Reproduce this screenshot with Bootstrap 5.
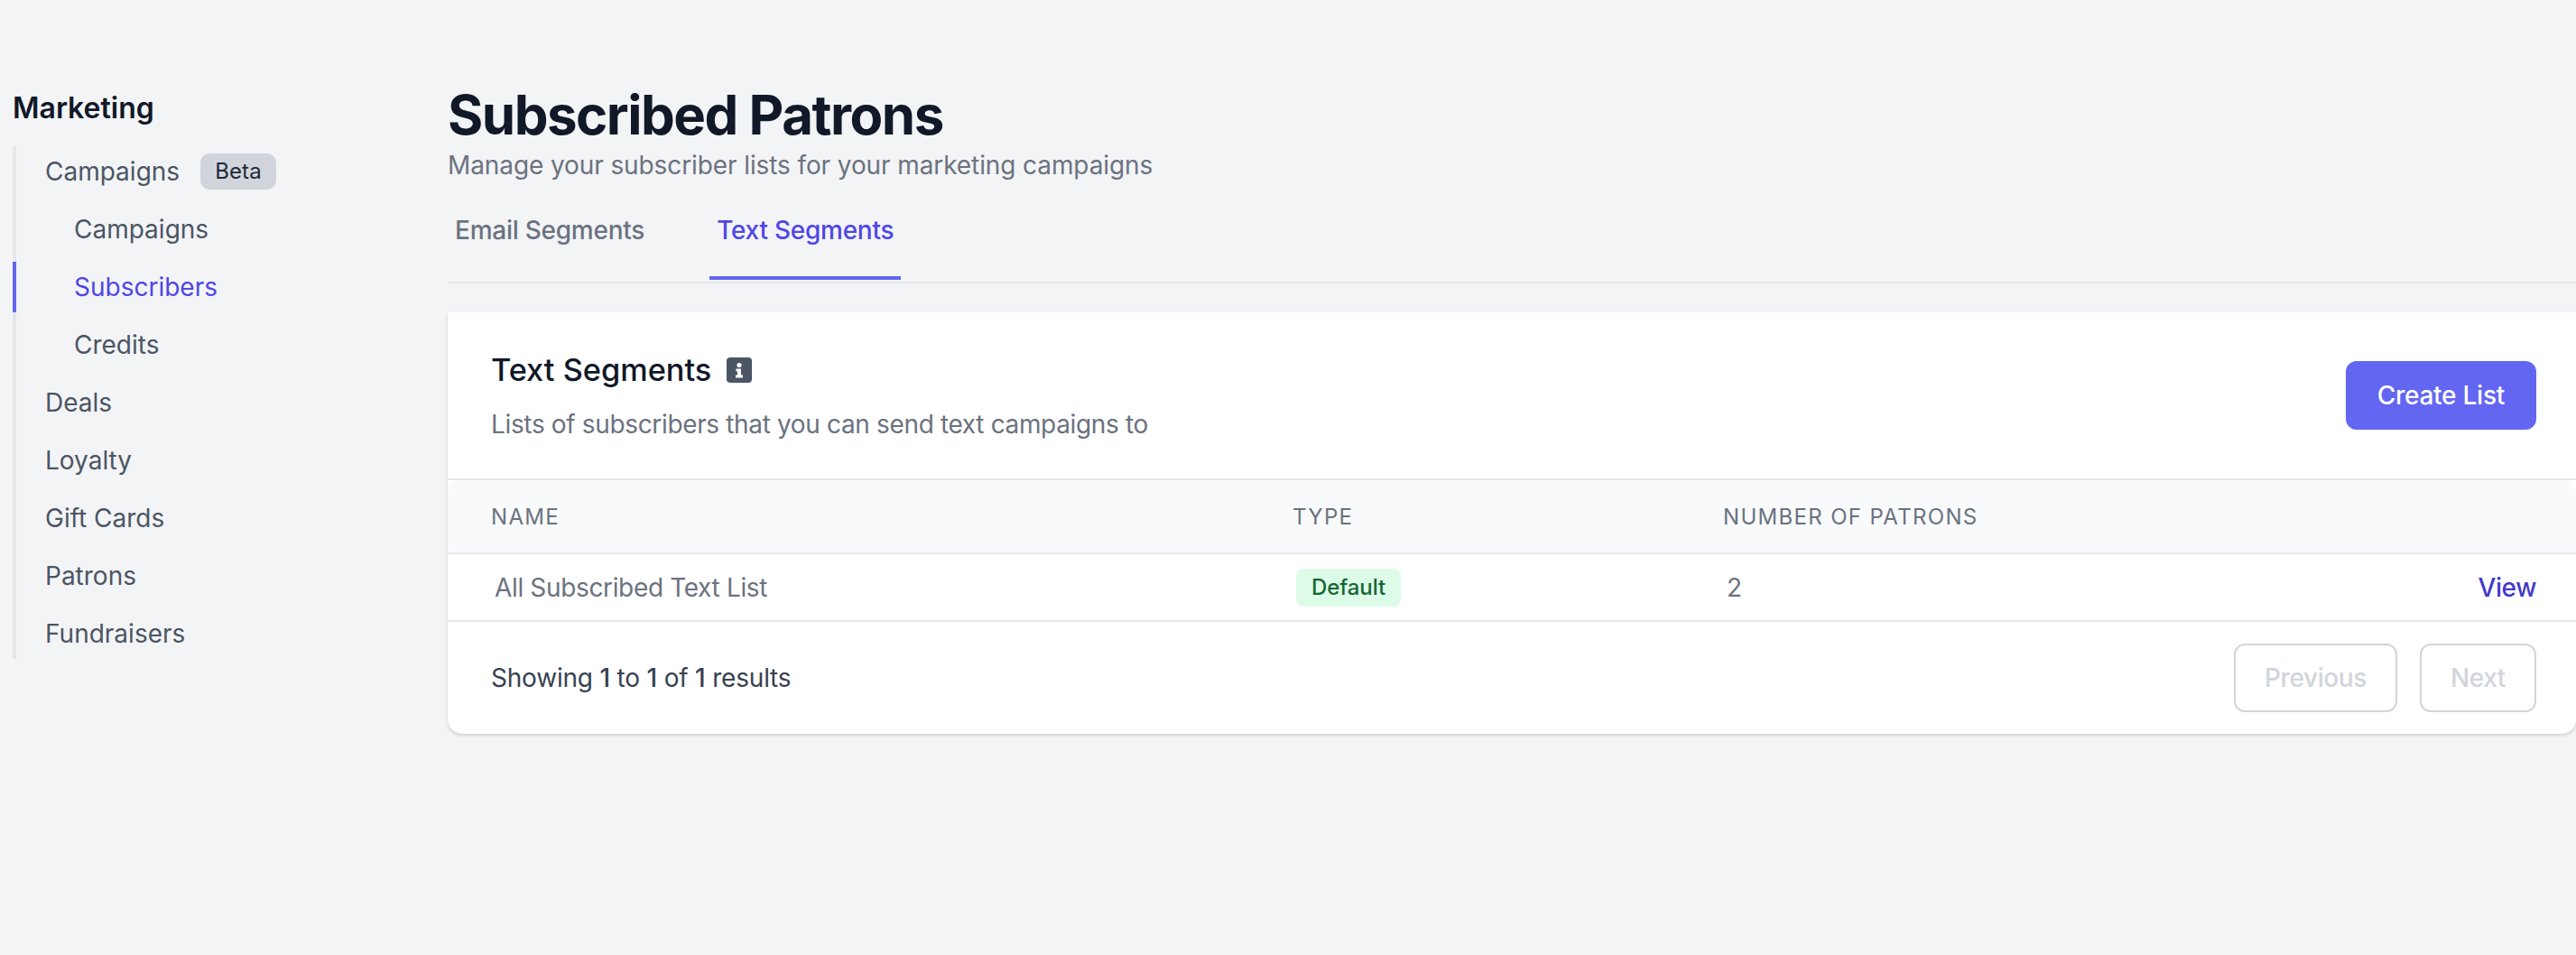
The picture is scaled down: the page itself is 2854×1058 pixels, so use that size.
<!DOCTYPE html>
<html lang="en">
<head>
<meta charset="utf-8">
<title>Subscribed Patrons</title>
<link rel="stylesheet" href="https://cdn.jsdelivr.net/npm/bootstrap@5.3.0/dist/css/bootstrap.min.css">
<style>
html,body{height:100%}
body{background:#f3f4f6;font-family:"Inter","Liberation Sans",sans-serif;font-size:28px;line-height:40px;color:#374151;overflow:hidden}
.side-col{width:496px;flex:none;padding:100px 0 0 14px}
.side-title{font-size:32px;line-height:40px;font-weight:600;color:#111827;margin:0 0 22px 0}
.side-rail{border-left:4px solid #e5e7eb;display:flex;flex-direction:column;gap:8px;width:400px}
.side-link{display:flex;align-items:center;height:56px;margin-left:-4px;padding-left:32px;border-left:4px solid transparent;color:#4b5563;font-weight:400;text-decoration:none}
.side-link.sub-link{padding-left:64px}
.side-link.is-current{border-left-color:#6366f1;color:#4f46e5}
.beta-tag{background:#d1d5db;color:#1f2937;font-size:24px;line-height:40px;height:40px;font-weight:400;border-radius:10px;padding:0 16px;margin-left:23px;letter-spacing:.15px}
.main-col{flex:1 1 auto;min-width:0;padding-top:91px}
.page-h{font-size:60px;line-height:72px;font-weight:700;color:#111827;margin:0;letter-spacing:-.025em}
.page-sub{font-size:28px;line-height:36px;color:#6b7280;margin:2px 0 0 0;letter-spacing:-.1px}
.tab-bar{border-bottom:2px solid #e5e7eb;padding-bottom:2px;gap:64px}
.tab-item{padding:34px 8px 31px;border-bottom:4px solid transparent;font-weight:500;color:#6b7280;text-decoration:none;letter-spacing:-.25px}
.tab-item.is-current{border-bottom-color:#6366f1;color:#4f46e5}
.seg-card{margin-top:32px;border:0;border-radius:0 0 16px 16px;background:#fff;box-shadow:0 2px 4px rgba(0,0,0,.12),0 1px 2px rgba(0,0,0,.06);--bs-card-bg:#fff}
.seg-head{height:186px;padding:0 44px 0 48px;border-bottom:2px solid #e5e7eb}
.seg-title-row{gap:17px}
.seg-title{font-size:34.3px;line-height:48px;font-weight:500;color:#111827;margin:0}
.seg-desc{color:#6b7280;line-height:40px;margin:16px 0 0;letter-spacing:-.35px}
.btn.btn-create{background:#6366f1;border:0;color:#fff;font-size:28px;font-weight:500;line-height:40px;padding:18px 35px;border-radius:12px;box-shadow:0 1px 2px rgba(0,0,0,.05);letter-spacing:-.25px}
.seg-table{table-layout:fixed;margin:0;--bs-table-bg:transparent;--bs-table-color:#6b7280;border-collapse:separate;border-spacing:0}
.seg-table th{height:82px;padding:2px 0 0 48px;background:#f9fafb;border-bottom:2px solid #e5e7eb;font-size:24px;font-weight:400;letter-spacing:.055em;color:#6b7280;vertical-align:middle;text-transform:uppercase}
.seg-table th:first-child{border-top-left-radius:16px}
.seg-table th:last-child{border-top-right-radius:16px}
.seg-table td{height:75px;padding:0 0 0 52px;border-bottom:2px solid #e5e7eb;vertical-align:middle;color:#6b7280;letter-spacing:-.35px}
.seg-table td.type-cell{padding-left:52px;letter-spacing:0}
.seg-table td.act-cell{text-align:right;padding:0 44px 0 0}
.col-a{width:888px}.col-b{width:477px}
.kind-tag{display:inline-block;background:#dcfce7;color:#166534;font-size:24px;font-weight:500;line-height:42px;height:42px;border-radius:8px;padding:0 17px;letter-spacing:-.1px}
.view-link{color:#4338ca;font-weight:500;text-decoration:none;letter-spacing:-.4px}
.seg-foot{height:124px;padding:0 44px 0 48px}
.foot-text{color:#374151;letter-spacing:-.2px}
.foot-text b{font-weight:500}
.foot-btns{gap:25px}
.btn.btn-page,.btn.btn-page:disabled{background:#fff;border:2px solid #d1d5db;color:#d1d5db;opacity:1;font-size:28px;font-weight:500;line-height:40px;padding:16px 32px;border-radius:12px;letter-spacing:-.4px}
</style>
</head>
<body>
<div class="d-flex h-100">
  <aside class="side-col">
    <h2 class="side-title">Marketing</h2>
    <nav class="side-rail">
      <a class="side-link" href="#">Campaigns <span class="beta-tag">Beta</span></a>
      <a class="side-link sub-link" href="#">Campaigns</a>
      <a class="side-link sub-link is-current" href="#">Subscribers</a>
      <a class="side-link sub-link" href="#">Credits</a>
      <a class="side-link" href="#">Deals</a>
      <a class="side-link" href="#">Loyalty</a>
      <a class="side-link" href="#">Gift Cards</a>
      <a class="side-link" href="#">Patrons</a>
      <a class="side-link" href="#">Fundraisers</a>
    </nav>
  </aside>
  <main class="main-col">
    <h1 class="page-h">Subscribed Patrons</h1>
    <p class="page-sub">Manage your subscriber lists for your marketing campaigns</p>
    <nav class="nav tab-bar">
      <a class="tab-item" href="#">Email Segments</a>
      <a class="tab-item is-current" href="#">Text Segments</a>
    </nav>
    <section class="card seg-card">
      <div class="seg-head d-flex align-items-center justify-content-between">
        <div>
          <div class="d-flex align-items-center seg-title-row">
            <h3 class="seg-title">Text Segments</h3>
            <svg width="28" height="28" viewBox="0 0 28 28" aria-hidden="true"><rect width="28" height="28" rx="4" fill="#4b5563"/><circle cx="14" cy="8.5" r="2.6" fill="#fff"/><path d="M10.5 12.5H16v7h2v3H10v-3h2v-4h-1.5z" fill="#fff"/></svg>
          </div>
          <p class="seg-desc">Lists of subscribers that you can send text campaigns to</p>
        </div>
        <button class="btn btn-create" type="button">Create List</button>
      </div>
      <table class="table seg-table">
        <colgroup><col class="col-a"><col class="col-b"><col><col></colgroup>
        <thead>
          <tr><th>Name</th><th>Type</th><th>Number of Patrons</th><th></th></tr>
        </thead>
        <tbody>
          <tr>
            <td>All Subscribed Text List</td>
            <td class="type-cell"><span class="kind-tag">Default</span></td>
            <td>2</td>
            <td class="act-cell"><a class="view-link" href="#">View</a></td>
          </tr>
        </tbody>
      </table>
      <div class="seg-foot d-flex align-items-center justify-content-between">
        <div class="foot-text">Showing <b>1</b> to <b>1</b> of <b>1</b> results</div>
        <div class="d-flex foot-btns">
          <button class="btn btn-page" type="button" disabled>Previous</button>
          <button class="btn btn-page" type="button" disabled>Next</button>
        </div>
      </div>
    </section>
  </main>
</div>
<script src="https://cdn.jsdelivr.net/npm/bootstrap@5.3.0/dist/js/bootstrap.bundle.min.js"></script>
</body>
</html>
